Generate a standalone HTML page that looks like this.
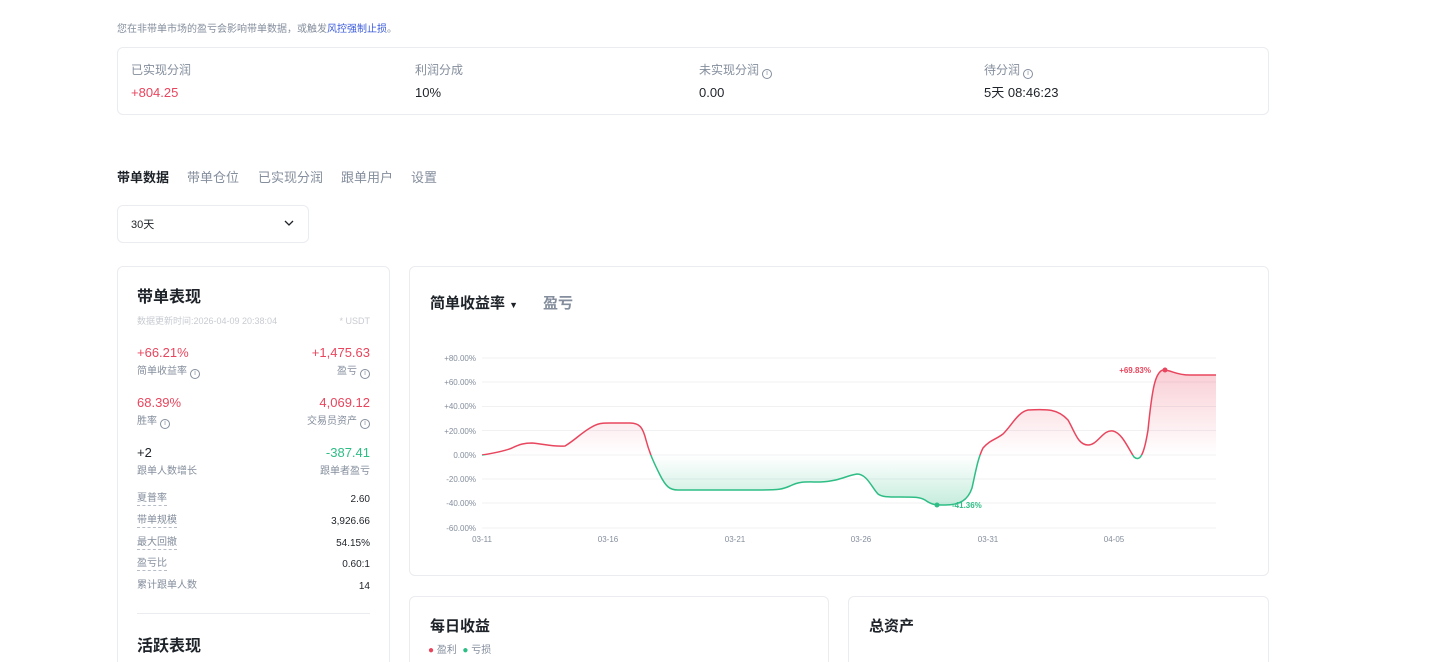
<!DOCTYPE html>
<html><head><meta charset="utf-8"><style>
*{margin:0;padding:0;box-sizing:border-box}
html,body{width:1443px;height:662px;overflow:hidden}
body{background:#fff;font-family:"Liberation Sans","Noto Sans CJK SC",sans-serif;color:#1e2329;position:relative;line-height:1.2}
.a{position:absolute;white-space:nowrap}
.card{position:absolute;border:1px solid #eaecef;border-radius:6px;background:#fff}
.g{color:#848e9c}.r{color:#e8465e}.gr{color:#2ebd85}
.i{display:inline-block;width:10px;height:10px;border:1px solid #848e9c;border-radius:50%;font-size:7px;line-height:8px;text-align:center;vertical-align:-1px;margin-left:3px;color:#848e9c}
.dl{border-bottom:1px dashed #b7bdc6;padding-bottom:1px}
</style></head><body>
<div class="a g" style="left:117px;top:24px;font-size:10px">您在非带单市场的盈亏会影响带单数据，或触发<span style="color:#3b5bdb">风控强制止损</span>。</div>
<div class="card" style="left:117px;top:47px;width:1152px;height:68px"></div>
<div class="a g" style="left:131px;top:63px;font-size:12px">已实现分润</div>
<div class="a r" style="left:131px;top:85px;font-size:13px">+804.25</div>
<div class="a g" style="left:415px;top:63px;font-size:12px">利润分成</div>
<div class="a" style="left:415px;top:85px;font-size:13px">10%</div>
<div class="a g" style="left:699px;top:63px;font-size:12px">未实现分润<span class="i">i</span></div>
<div class="a" style="left:699px;top:85px;font-size:13px">0.00</div>
<div class="a g" style="left:984px;top:63px;font-size:12px">待分润<span class="i">i</span></div>
<div class="a" style="left:984px;top:85px;font-size:13px">5天 08:46:23</div>

<div class="a" style="left:117px;top:170px;font-size:13px;font-weight:bold">带单数据</div>
<div class="a g" style="left:187px;top:170px;font-size:13px">带单仓位</div>
<div class="a g" style="left:258px;top:170px;font-size:13px">已实现分润</div>
<div class="a g" style="left:341px;top:170px;font-size:13px">跟单用户</div>
<div class="a g" style="left:411px;top:170px;font-size:13px">设置</div>

<div class="card" style="left:117px;top:205px;width:192px;height:38px"></div>
<div class="a" style="left:131px;top:219px;font-size:11px">30天</div>
<svg class="a" style="left:284px;top:219px" width="10" height="8"><path d="M1 2l4 4 4-4" stroke="#1e2329" fill="none" stroke-width="1.3"/></svg>

<div class="card" style="left:117px;top:266px;width:273px;height:420px"></div>
<div class="a" style="left:137px;top:288px;font-size:16px;font-weight:bold">带单表现</div>
<div class="a" style="left:137px;top:316px;font-size:9px;color:#c7cbd1">数据更新时间:2026-04-09 20:38:04</div>
<div class="a" style="right:1073px;top:316px;font-size:9px;color:#c7cbd1">* USDT</div>
<div class="a r" style="left:137px;top:345px;font-size:13px">+66.21%</div>
<div class="a r" style="right:1073px;top:345px;font-size:13px">+1,475.63</div>
<div class="a g" style="left:137px;top:366px;font-size:10px">简单收益率<span class="i">i</span></div>
<div class="a g" style="right:1073px;top:366px;font-size:10px">盈亏<span class="i">i</span></div>
<div class="a r" style="left:137px;top:395px;font-size:13px">68.39%</div>
<div class="a r" style="right:1073px;top:395px;font-size:13px">4,069.12</div>
<div class="a g" style="left:137px;top:416px;font-size:10px">胜率<span class="i">i</span></div>
<div class="a g" style="right:1073px;top:416px;font-size:10px">交易员资产<span class="i">i</span></div>
<div class="a" style="left:137px;top:445px;font-size:13px">+2</div>
<div class="a gr" style="right:1073px;top:445px;font-size:13px">-387.41</div>
<div class="a g" style="left:137px;top:466px;font-size:10px">跟单人数增长</div>
<div class="a g" style="right:1073px;top:466px;font-size:10px">跟单者盈亏</div>
<div class="a g" style="left:137px;top:493px;font-size:10px"><span class="dl">夏普率</span></div><div class="a" style="right:1073px;top:494px;font-size:10px">2.60</div>
<div class="a g" style="left:137px;top:515px;font-size:10px"><span class="dl">带单规模</span></div><div class="a" style="right:1073px;top:516px;font-size:10px">3,926.66</div>
<div class="a g" style="left:137px;top:537px;font-size:10px"><span class="dl">最大回撤</span></div><div class="a" style="right:1073px;top:538px;font-size:10px">54.15%</div>
<div class="a g" style="left:137px;top:558px;font-size:10px"><span class="dl">盈亏比</span></div><div class="a" style="right:1073px;top:559px;font-size:10px">0.60:1</div>
<div class="a g" style="left:137px;top:580px;font-size:10px">累计跟单人数</div><div class="a" style="right:1073px;top:581px;font-size:10px">14</div>
<div class="a" style="left:137px;top:613px;width:233px;height:1px;background:#eaecef"></div>
<div class="a" style="left:137px;top:637px;font-size:16px;font-weight:bold">活跃表现</div>

<div class="card" style="left:409px;top:266px;width:860px;height:310px"></div>
<div class="a" style="left:430px;top:295px;font-size:15px;font-weight:bold">简单收益率 <span style="font-size:9px">▼</span></div>
<div class="a g" style="left:543px;top:295px;font-size:15px;font-weight:bold">盈亏</div>
<svg class="a" style="left:409px;top:266px" width="860" height="310" viewBox="409 266 860 310">
<defs>
<linearGradient id="rg" x1="0" y1="358" x2="0" y2="455" gradientUnits="userSpaceOnUse"><stop offset="0" stop-color="#e8465e" stop-opacity=".3"/><stop offset="1" stop-color="#e8465e" stop-opacity="0"/></linearGradient>
<linearGradient id="gg" x1="0" y1="455" x2="0" y2="510" gradientUnits="userSpaceOnUse"><stop offset="0" stop-color="#2ebd85" stop-opacity="0"/><stop offset="1" stop-color="#2ebd85" stop-opacity=".3"/></linearGradient>
<clipPath id="up"><rect x="400" y="300" width="900" height="155"/></clipPath>
<clipPath id="dn"><rect x="400" y="455" width="900" height="100"/></clipPath>
<path id="c" d="M482,455 C495,453 505,451 512,448 C520,444 525,443 532,443 C545,444 552,447 565,446 C575,440 580,434 590,428 C598,423 602,423 610,423 L630,423 C640,423 643,428 646,440 C650,455 655,465 660,475 C666,487 670,490 678,490 L760,490 C780,490 783,489 790,486 C800,481 805,482 820,482 C840,481 845,476 857,474 C867,474 872,488 878,494 C882,497 887,497 900,497 C915,497 920,497 925,500 C932,505 935,505 945,505 C960,505 968,500 972,488 C976,470 978,458 983,448 C990,440 995,440 1003,434 C1012,425 1018,412 1028,410 C1048,409 1058,409 1068,420 C1075,432 1078,445 1088,445 C1098,445 1103,429 1113,431 C1122,433 1128,448 1134,457 C1140,462 1144,455 1148,430 C1152,390 1155,372 1163,370 C1172,370 1175,375 1190,375 L1216,375"/>
<path id="f" d="M482,455 C495,453 505,451 512,448 C520,444 525,443 532,443 C545,444 552,447 565,446 C575,440 580,434 590,428 C598,423 602,423 610,423 L630,423 C640,423 643,428 646,440 C650,455 655,465 660,475 C666,487 670,490 678,490 L760,490 C780,490 783,489 790,486 C800,481 805,482 820,482 C840,481 845,476 857,474 C867,474 872,488 878,494 C882,497 887,497 900,497 C915,497 920,497 925,500 C932,505 935,505 945,505 C960,505 968,500 972,488 C976,470 978,458 983,448 C990,440 995,440 1003,434 C1012,425 1018,412 1028,410 C1048,409 1058,409 1068,420 C1075,432 1078,445 1088,445 C1098,445 1103,429 1113,431 C1122,433 1128,448 1134,457 C1140,462 1144,455 1148,430 C1152,390 1155,372 1163,370 C1172,370 1175,375 1190,375 L1216,375 L1216,455 Z"/>
</defs>
<g stroke="#f0f1f3" stroke-width="1">
<line x1="482" y1="358" x2="1216" y2="358"/><line x1="482" y1="382" x2="1216" y2="382"/><line x1="482" y1="406.5" x2="1216" y2="406.5"/><line x1="482" y1="430.5" x2="1216" y2="430.5"/><line x1="482" y1="455" x2="1216" y2="455"/><line x1="482" y1="479" x2="1216" y2="479"/><line x1="482" y1="503" x2="1216" y2="503"/><line x1="482" y1="528" x2="1216" y2="528"/>
</g>
<g font-size="8" fill="#848e9c" text-anchor="end" font-family="Liberation Sans">
<text x="476" y="361">+80.00%</text><text x="476" y="385">+60.00%</text><text x="476" y="409">+40.00%</text><text x="476" y="434">+20.00%</text><text x="476" y="458">0.00%</text><text x="476" y="482">-20.00%</text><text x="476" y="506">-40.00%</text><text x="476" y="531">-60.00%</text>
</g>
<g font-size="8" fill="#848e9c" text-anchor="middle" font-family="Liberation Sans">
<text x="482" y="542">03-11</text><text x="608" y="542">03-16</text><text x="735" y="542">03-21</text><text x="861" y="542">03-26</text><text x="988" y="542">03-31</text><text x="1114" y="542">04-05</text>
</g>
<g clip-path="url(#up)"><use href="#f" fill="url(#rg)"/><use href="#c" fill="none" stroke="#e8465e" stroke-width="1.5"/></g>
<g clip-path="url(#dn)"><use href="#f" fill="url(#gg)"/><use href="#c" fill="none" stroke="#2ebd85" stroke-width="1.5"/></g>
<circle cx="1165" cy="370" r="2.5" fill="#e8465e"/>
<circle cx="937" cy="505" r="2.5" fill="#2ebd85"/>
<text x="1151" y="373" font-size="8" fill="#e8465e" text-anchor="end" font-weight="bold" font-family="Liberation Sans">+69.83%</text>
<text x="952" y="508" font-size="8" fill="#2ebd85" font-weight="bold" font-family="Liberation Sans">-41.36%</text>
</svg>

<div class="card" style="left:409px;top:596px;width:420px;height:80px"></div>
<div class="a" style="left:430px;top:618px;font-size:15px;font-weight:bold">每日收益</div>
<div class="a g" style="left:428px;top:645px;font-size:10px"><span style="color:#e8465e">●</span> 盈利 &nbsp;<span style="color:#2ebd85">●</span> 亏损</div>
<div class="card" style="left:848px;top:596px;width:421px;height:80px"></div>
<div class="a" style="left:869px;top:618px;font-size:15px;font-weight:bold">总资产</div>
</body></html>
